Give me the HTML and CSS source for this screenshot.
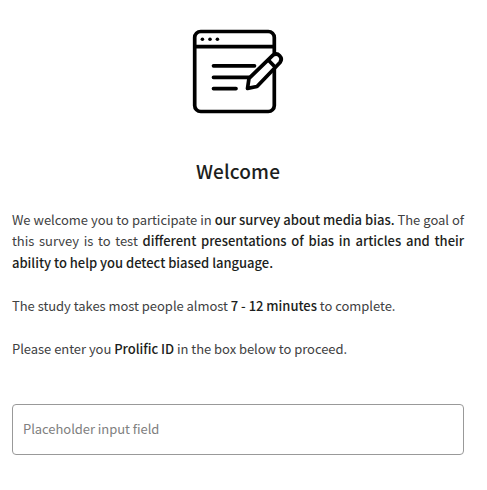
FILE: index.html
```html
<!DOCTYPE html>
<html lang="en">
<head>
<meta charset="utf-8">
<title>Welcome</title>
<link rel="stylesheet" href="styles.css">
</head>
<body>
<main class="survey">
  <svg class="survey-icon" width="110" height="100" viewBox="0 0 110 100" fill="none" stroke="#000" stroke-width="3.7" stroke-linecap="round" stroke-linejoin="round" aria-hidden="true">
    <rect x="11.7" y="11.5" width="79.6" height="80" rx="6"/>
    <path d="M12 26.7H91M30.5 45.8H71.5M30.5 57.3H66M30.5 68.6H53"/>
    <g fill="#000" stroke="none"><circle cx="19.4" cy="19.2" r="1.8"/><circle cx="27" cy="19.2" r="1.8"/><circle cx="34.4" cy="19.2" r="1.8"/></g>
    <path fill="#fff" d="M64.5 68.4L66 58.3L89.7 35.3C95 31.5 100.5 38 97 42.5L74 66.5Z"/>
    <path d="M85.5 40.3L91.8 46.7"/>
  </svg>
  <h1 class="title">Welcome</h1>
  <div class="copy">
    <p>We welcome you to participate in <strong>our survey about media bias.</strong> The goal of this survey is to test <strong>different presentations of bias in articles and their ability to help you detect biased language.</strong></p>
    <p>The study takes most people almost <strong>7 - 12 minutes</strong> to complete.</p>
    <p>Please enter you <strong>Prolific ID</strong> in the box below to proceed.</p>
  </div>
  <input class="field" type="text" placeholder="Placeholder input field">
</main>
</body>
</html>
```
FILE: styles.css
```css
* { box-sizing: border-box; }
body {
  margin: 0;
  background: #fff;
  color: #1c1e20;
  font-family: "Noto Sans CJK SC", "Noto Sans", sans-serif;
}
.survey {
  display: flex;
  flex-direction: column;
  padding: 20px 23px 0 12px;
}
.survey-icon { margin-left: 171px; }
.title {
  margin: 36px 0 22.8px;
  font-size: 19px;
  font-weight: 500;
  line-height: 30px;
  letter-spacing: 0.15px;
  text-align: center;
}
.copy {
  color: #404142;
  font-size: 13px;
  font-weight: 400;
  line-height: 21.5px;
  letter-spacing: -0.04px;
  text-align: justify;
}
.copy p { margin: 0 0 21.5px; }
.copy strong {
  color: #1c1e20;
  font-weight: 500;
  letter-spacing: -0.02px;
}
.field {
  width: 100%;
  height: 51px;
  margin-top: 23.2px;
  padding: 0 10px 2px;
  border: 1px solid #999;
  border-radius: 4px;
  background: #fff;
  font: 400 13px "Noto Sans CJK SC", "Noto Sans", sans-serif;
  letter-spacing: -0.05px;
}
.field::placeholder { color: #808080; opacity: 1; }
```
